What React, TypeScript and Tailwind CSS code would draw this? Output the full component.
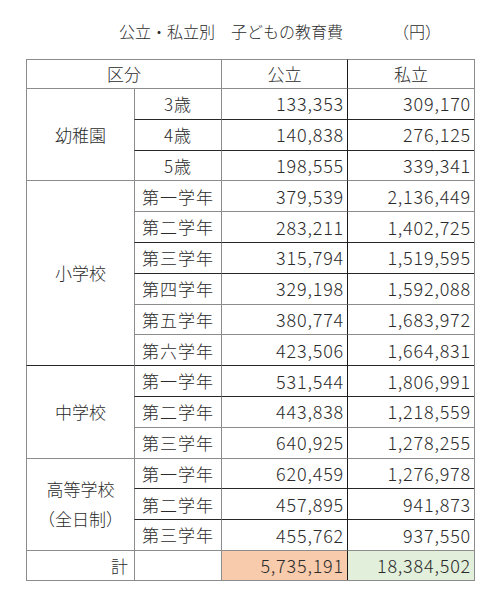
const GRAY = "border-[#8c8c8c]";

type Row = {
  group?: { label: string[]; span: number; dark: boolean };
  grade: string;
  pub: string;
  priv: string;
  dark: boolean;
};

const rows: Row[] = [
  { group: { label: ["幼稚園"], span: 3, dark: false }, grade: "3歳", pub: "133,353", priv: "309,170", dark: false },
  { grade: "4歳", pub: "140,838", priv: "276,125", dark: true },
  { grade: "5歳", pub: "198,555", priv: "339,341", dark: true },
  { group: { label: ["小学校"], span: 6, dark: false }, grade: "第一学年", pub: "379,539", priv: "2,136,449", dark: false },
  { grade: "第二学年", pub: "283,211", priv: "1,402,725", dark: false },
  { grade: "第三学年", pub: "315,794", priv: "1,519,595", dark: true },
  { grade: "第四学年", pub: "329,198", priv: "1,592,088", dark: true },
  { grade: "第五学年", pub: "380,774", priv: "1,683,972", dark: false },
  { grade: "第六学年", pub: "423,506", priv: "1,664,831", dark: false },
  { group: { label: ["中学校"], span: 3, dark: true }, grade: "第一学年", pub: "531,544", priv: "1,806,991", dark: true },
  { grade: "第二学年", pub: "443,838", priv: "1,218,559", dark: true },
  { grade: "第三学年", pub: "640,925", priv: "1,278,255", dark: false },
  { group: { label: ["高等学校", "（全日制）"], span: 3, dark: false }, grade: "第一学年", pub: "620,459", priv: "1,276,978", dark: false },
  { grade: "第二学年", pub: "457,895", priv: "941,873", dark: true },
  { grade: "第三学年", pub: "455,762", priv: "937,550", dark: true },
];

const num = "text-right text-[18px] pr-[3px] tracking-[0.8px]";

export default function App() {
  return (
    <div className="w-[500px] h-[593px] bg-white text-[#2b2b2b] font-light font-['Noto_Sans_CJK_JP',sans-serif] pt-[21px]">
      <div className="flex h-[20px] items-center text-[16px] leading-[20px]">
        <span className="ml-[119px]">公立・私立別　子どもの教育費</span>
        <span className="ml-[50px]">（円）</span>
      </div>

      <table className="ml-[26px] mt-[18px] w-[448px] table-fixed border-separate border-spacing-0 text-[17px] border-r border-b border-[#8c8c8c]">
        <colgroup>
          <col className="w-[108px]" />
          <col className="w-[87px]" />
          <col className="w-[126px]" />
          <col className="w-[127px]" />
        </colgroup>
        <tbody>
          <tr className="h-[29px]">
            <td colSpan={2} className={`border-t border-l ${GRAY} text-center`}>区分</td>
            <td className={`border-t border-l ${GRAY} text-center`}>公立</td>
            <td className="border-t border-l border-t-[#8c8c8c] border-l-[#1a1a1a] text-center">私立</td>
          </tr>
          {rows.map((r, i) => {
            const top = r.dark ? "border-t-[#262626]" : "border-t-[#8c8c8c]";
            return (
              <tr key={i} className="h-[30.8px]">
                {r.group && (
                  <td
                    rowSpan={r.group.span}
                    className={`border-t border-l border-l-[#8c8c8c] ${r.group.dark ? "border-t-[#262626]" : "border-t-[#8c8c8c]"} text-center leading-[30px]`}
                  >
                    {r.group.label.map((l) => (
                      <div key={l}>{l}</div>
                    ))}
                  </td>
                )}
                <td className={`border-t border-l border-l-[#8c8c8c] ${top} text-center tracking-[1px]`}>{r.grade}</td>
                <td className={`border-t border-l border-l-[#8c8c8c] ${top} ${num}`}>{r.pub}</td>
                <td className={`border-t border-l border-l-[#1a1a1a] ${top} ${num}`}>{r.priv}</td>
              </tr>
            );
          })}
          <tr className="h-[30px]">
            <td className={`border-t border-l ${GRAY} text-right pr-[6px]`}>計</td>
            <td className={`border-t border-l ${GRAY}`}></td>
            <td className={`border-t border-l ${GRAY} bg-[#f8cbad] ${num}`}>5,735,191</td>
            <td className={`border-t border-l border-t-[#8c8c8c] border-l-[#1a1a1a] bg-[#e2efda] ${num}`}>18,384,502</td>
          </tr>
        </tbody>
      </table>
    </div>
  );
}
